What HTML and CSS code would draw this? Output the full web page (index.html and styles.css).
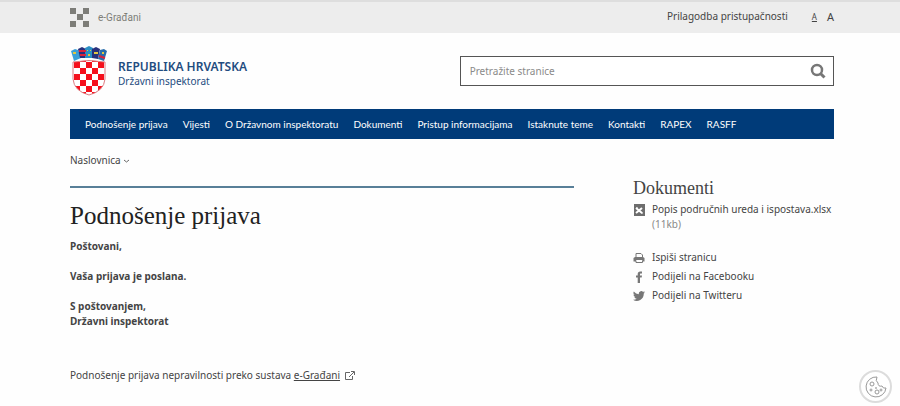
FILE: index.html
```html
<!DOCTYPE html>
<html lang="hr">
<head>
    <meta charset="UTF-8">
    <meta name="viewport" content="width=device-width, initial-scale=1.0">
    <title>Državni inspektorat - Podnošenje prijava</title>
    <link rel="stylesheet" href="styles.css">
</head>
<body>
    <div class="topbar">
        <div class="container topbar-inner">
            <a class="egov" href="#">
                <svg width="19" height="19" viewBox="0 0 19 19" fill="#7d7d78">
                    <path d="M0 0h6v6H0zM13 0h6v6h-6zM7 6h6v6H7zM0 13h6v6H0zM13 13h6v6h-6z"/>
                </svg>
                <span>e-Građani</span>
            </a>
            <div class="access">
                <a href="#">Prilagodba pristupačnosti</a>
                <a class="font-small" href="#">A</a>
                <a class="font-large" href="#">A</a>
            </div>
        </div>
    </div>

    <header class="container header">
        <a class="logo" href="#">
            <svg width="38" height="50" viewBox="0 0 38 50">
                <defs>
                    <clipPath id="shield"><path d="M3 16Q19 13 35 16V33Q34 45 19 49Q4 45 3 33Z"/></clipPath>
                    <pattern id="checks" x="4" y="16" width="12" height="12" patternUnits="userSpaceOnUse">
                        <path fill="#fff" d="M0 0h12v12H0z"/>
                        <path fill="#f5101c" d="M0 0h6v6H0zM6 6h6v6H6z"/>
                    </pattern>
                </defs>
                <path fill="#3ba0d8" d="M4 15L1 5L5 3L8 4L11 12Z"/>
                <path fill="#28307c" d="M10 12L8 3L12 1L16 3L16 12Z"/>
                <path fill="#2b8fc4" d="M15 12V2L19 0L23 2V12Z"/>
                <path fill="#28307c" d="M22 12L22 3L26 1L30 3L28 13Z"/>
                <path fill="#276cab" d="M28 13L30 4L34 3L37 5L34 15Z"/>
                <path stroke="#d9223b" stroke-width="2" d="M9 5h7M10 9h6M29 10l6 2"/>
                <path fill="#e3c541" d="M3 6h3v2H3zM17 4h1v1h-1zM20 4h1v1h-1zM18 8h2v2h-2zM24 6h4v2h-4zM32 6h2v2h-2z"/>
                <g clip-path="url(#shield)"><path fill="#fff" d="M3 12h32v37H3z"/><path fill="url(#checks)" d="M4 12h30v37H4z"/></g>
                <path fill="none" stroke="#dd7a80" d="M3 16Q19 13 35 16V33Q34 45 19 49Q4 45 3 33Z"/>
            </svg>
            <span class="logo-text">
                <strong>REPUBLIKA HRVATSKA</strong>
                <span>Državni inspektorat</span>
            </span>
        </a>
        <form class="search">
            <input type="search" placeholder="Pretražite stranice" aria-label="Pretražite stranice">
            <button type="submit" aria-label="Traži">
                <svg width="16" height="16" viewBox="0 0 16 16" fill="none" stroke="#777">
                    <circle cx="7" cy="7" r="5" stroke-width="2.500"/>
                    <path d="M10.500 10.500l4 4" stroke-width="3"/>
                </svg>
            </button>
        </form>
    </header>

    <div class="container">
        <nav class="menu">
            <a href="#">Podnošenje prijava</a>
            <a href="#">Vijesti</a>
            <a href="#">O Državnom inspektoratu</a>
            <a href="#">Dokumenti</a>
            <a href="#">Pristup informacijama</a>
            <a href="#">Istaknute teme</a>
            <a href="#">Kontakti</a>
            <a href="#">RAPEX</a>
            <a href="#">RASFF</a>
        </nav>
        <div class="breadcrumb">
            <a href="#">Naslovnica</a>
            <svg width="5" height="4" viewBox="0 0 5 4" fill="none" stroke="#666"><path d="M0 1l2.500 2L5 1"/></svg>
        </div>
    </div>

    <div class="container columns">
        <main class="content">
            <h1>Podnošenje prijava</h1>
            <div class="message">
                <p>Poštovani,</p>
                <p>Vaša prijava je poslana.</p>
                <p>S poštovanjem,<br>Državni inspektorat</p>
            </div>
            <p class="note">Podnošenje prijava nepravilnosti preko sustava <a href="#">e-Građani</a>
                <svg width="10" height="9" viewBox="0 0 10 9" fill="none" stroke="#666"><path d="M5 1.500H.5v7h7V5M4 6l5-5M6 .5h3.500V4"/></svg>
            </p>
        </main>

        <aside class="sidebar">
            <h2>Dokumenti</h2>
            <ul>
                <li>
                    <svg width="12" height="12" viewBox="0 0 12 12"><path fill="#6d6d6d" d="M1 0h11v12H1z"/><path stroke="#fff" stroke-width="2" d="M3 4l6 5M9 4L3 9"/><path stroke="#fff" d="M3 4h2M8 9h2"/></svg>
                    <span><a href="#">Popis područnih ureda i ispostava.xlsx</a> <small>(11kb)</small></span>
                </li>
            </ul>
            <ul class="share">
                <li>
                    <svg width="12" height="12" viewBox="0 0 12 12"><path fill="none" stroke="#777" d="M3 5V1.500h5L9.500 3v2M3 8.500v2h6.500v-2"/><path fill="#777" d="M2 5h8l1.500 1v3.500H9.500V8H3v1.500H.5V6z"/></svg>
                    <a href="#">Ispiši stranicu</a>
                </li>
                <li>
                    <svg width="12" height="12" viewBox="0 0 12 12"><path fill="#777" d="M9 .5V2.500H7.500Q7 2.500 7 3.200V4.500H9L8.700 6.500H7V12H4.700V6.500H3V4.500H4.700V3Q4.700.5 7.200.5Z"/></svg>
                    <a href="#">Podijeli na Facebooku</a>
                </li>
                <li>
                    <svg width="12" height="12" viewBox="0 0 24 24"><path fill="#777" d="M24 4.600a10 10 0 0 1-2.800.8 5 5 0 0 0 2.100-2.700 10 10 0 0 1-3.100 1.200 4.900 4.900 0 0 0-8.400 4.500A14 14 0 0 1 1.700 3.100a4.900 4.900 0 0 0 1.500 6.600 5 5 0 0 1-2.200-.6 4.900 4.900 0 0 0 3.900 4.900 5 5 0 0 1-2.200.1 4.900 4.900 0 0 0 4.600 3.400A10 10 0 0 1 0 19.500a14 14 0 0 0 21.500-12.400A10 10 0 0 0 24 4.600z"/></svg>
                    <a href="#">Podijeli na Twitteru</a>
                </li>
            </ul>
        </aside>
    </div>

    <button class="cookie" type="button" aria-label="Kolačići">
        <svg width="22" height="22" viewBox="0 0 22 22" fill="none" stroke="#999">
            <path d="M12 1A10 10 0 1 0 21 12Q18 13 17 10Q13 11 13 7Q10 5 12 1Z"/>
            <circle cx="7" cy="8" r="2"/>
            <circle cx="12" cy="16" r="2"/>
            <circle cx="6" cy="14" r="1"/>
            <circle cx="11" cy="12" r=".5"/>
            <circle cx="16" cy="14" r="1"/>
        </svg>
    </button>
</body>
</html>
```
FILE: styles.css
```css
* {
    box-sizing: border-box;
}
body {
    margin: 0;
    background: #fefefe;
    color: #444;
    font-family: "Noto Sans", sans-serif;
    font-size: 10px;
    line-height: 15px;
}
a {
    color: inherit;
    text-decoration: none;
}
svg {
    flex: none;
}
.container {
    margin: 0 66px 0 70px;
}
.topbar {
    background: #ededed;
    border-top: 2px solid #dedede;
}
.topbar-inner {
    display: flex;
    justify-content: space-between;
    align-items: center;
    height: 31px;
    padding-bottom: 2px;
}
.egov {
    display: flex;
    align-items: center;
    gap: 9px;
    padding-top: 2px;
    color: #7d7d78;
    font-family: Roboto, sans-serif;
}
.access {
    display: flex;
    align-items: center;
}
.font-small {
    margin: 0 10px 0 24px;
    font-size: 8px;
    text-decoration: underline;
}
.font-large {
    font-size: 11px;
}
.header {
    display: flex;
    justify-content: space-between;
    align-items: center;
    height: 76px;
}
.logo {
    display: flex;
    align-items: center;
    gap: 10px;
    color: #1f4c80;
}
.logo-text {
    display: flex;
    flex-direction: column;
    padding-top: 6px;
}
.logo-text strong {
    font-size: 12px;
    font-weight: 600;
}
.search {
    display: flex;
    width: 49%;
    height: 30px;
    border: 1px solid #555;
    background: #fff;
}
.search input {
    flex: 1;
    min-width: 0;
    padding: 0 9px;
    border: 0;
    background: none;
    font: inherit;
}
.search input::placeholder {
    color: #8a8a8a;
}
.search button {
    display: flex;
    align-items: center;
    padding: 0 7px;
    border: 0;
    background: none;
}
.menu {
    display: flex;
    align-items: center;
    gap: 15px;
    height: 30px;
    padding: 0 15px;
    background: #003b79;
    color: #fff;
    font-family: Lato, sans-serif;
    white-space: nowrap;
}
.breadcrumb {
    display: flex;
    align-items: center;
    gap: 3px;
    margin: 14px 0 18px;
}
.columns {
    display: flex;
    justify-content: space-between;
}
.content {
    width: 66%;
    border-top: 2px solid #587f98;
}
h1,
h2 {
    margin: 0;
    font-family: "Liberation Serif", serif;
    font-weight: 400;
}
h1 {
    margin: 13px 0 8px;
    color: #222;
    font-size: 25px;
    line-height: 30px;
}
.message {
    font-weight: 700;
}
.message p {
    margin: 0 0 15px;
}
.note {
    margin: 39px 0 0;
}
.note a {
    text-decoration: underline;
}
.note svg {
    margin-left: 2px;
    vertical-align: -1px;
}
.sidebar {
    width: 201px;
    margin-top: -8px;
}
h2 {
    font-size: 18px;
    line-height: 20px;
}
.sidebar ul {
    margin: 4px 0 0;
    padding: 0;
    list-style: none;
}
.sidebar li {
    display: flex;
    gap: 7px;
}
.sidebar li svg {
    margin-top: 2px;
}
.sidebar small {
    display: block;
    color: #888;
    font-size: 10px;
}
.sidebar .share {
    display: grid;
    gap: 4px;
    margin-top: 18px;
}
.cookie {
    position: fixed;
    right: 8px;
    bottom: 3px;
    display: flex;
    align-items: center;
    justify-content: center;
    width: 33px;
    height: 33px;
    padding: 0;
    border: 2px solid #dcdcdc;
    border-radius: 50%;
    background: #fff;
}
```
